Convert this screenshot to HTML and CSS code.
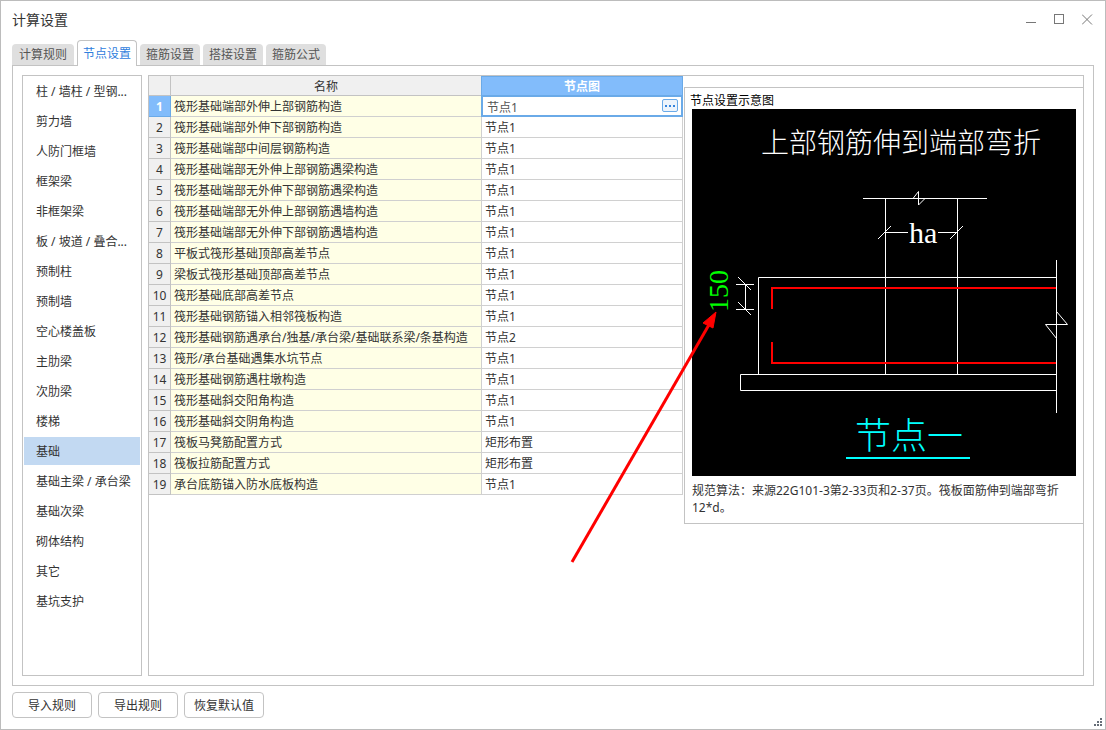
FILE: index.html
```html
<!DOCTYPE html>
<html lang="zh-CN">
<head>
<meta charset="utf-8">
<title>计算设置</title>
<link rel="stylesheet" href="styles.css">
</head>
<body>
<div class="window">
  <header class="titlebar">
    <h1 class="title">计算设置</h1>
    <div class="controls">
      <button type="button" class="control" aria-label="最小化"><svg width="12" height="12" viewBox="0 0 12 12"><path d="M0 8.5H10"/></svg></button>
      <button type="button" class="control" aria-label="最大化"><svg width="12" height="12" viewBox="0 0 12 12"><rect x="0.5" y="0.5" width="9" height="9"/></svg></button>
      <button type="button" class="control" aria-label="关闭"><svg width="12" height="12" viewBox="0 0 12 12"><path d="M0 0.5L10 10.5M10 0.5L0 10.5"/></svg></button>
    </div>
  </header>

  <div class="tabs" role="tablist">
    <button type="button" class="tab tab-first" role="tab">计算规则</button>
    <button type="button" class="tab active" role="tab" aria-selected="true">节点设置</button>
    <button type="button" class="tab" role="tab">箍筋设置</button>
    <button type="button" class="tab" role="tab">搭接设置</button>
    <button type="button" class="tab" role="tab">箍筋公式</button>
  </div>

  <main class="panel">
    <nav class="categories">
      <button type="button" class="category">柱 / 墙柱 / 型钢...</button>
      <button type="button" class="category">剪力墙</button>
      <button type="button" class="category">人防门框墙</button>
      <button type="button" class="category">框架梁</button>
      <button type="button" class="category">非框架梁</button>
      <button type="button" class="category">板 / 坡道 / 叠合...</button>
      <button type="button" class="category">预制柱</button>
      <button type="button" class="category">预制墙</button>
      <button type="button" class="category">空心楼盖板</button>
      <button type="button" class="category">主肋梁</button>
      <button type="button" class="category">次肋梁</button>
      <button type="button" class="category">楼梯</button>
      <button type="button" class="category selected">基础</button>
      <button type="button" class="category">基础主梁 / 承台梁</button>
      <button type="button" class="category">基础次梁</button>
      <button type="button" class="category">砌体结构</button>
      <button type="button" class="category">其它</button>
      <button type="button" class="category">基坑支护</button>
    </nav>

    <section class="content">
      <table class="grid">
        <colgroup><col class="col-no"><col class="col-name"><col class="col-node"></colgroup>
        <thead><tr><th></th><th>名称</th><th class="current">节点图</th></tr></thead>
        <tbody>
          <tr class="editing"><th class="current">1</th><td>筏形基础端部外伸上部钢筋构造</td><td><div class="editor"><input class="editor-input" type="text" value="节点1" aria-label="节点图"><button type="button" class="more" aria-label="选择节点图"><svg width="10" height="2" viewBox="0 0 10 2"><path d="M0 0h2v2h-2zM4 0h2v2h-2zM8 0h2v2h-2z"/></svg></button></div></td></tr>
          <tr><th>2</th><td>筏形基础端部外伸下部钢筋构造</td><td>节点1</td></tr>
          <tr><th>3</th><td>筏形基础端部中间层钢筋构造</td><td>节点1</td></tr>
          <tr><th>4</th><td>筏形基础端部无外伸上部钢筋遇梁构造</td><td>节点1</td></tr>
          <tr><th>5</th><td>筏形基础端部无外伸下部钢筋遇梁构造</td><td>节点1</td></tr>
          <tr><th>6</th><td>筏形基础端部无外伸上部钢筋遇墙构造</td><td>节点1</td></tr>
          <tr><th>7</th><td>筏形基础端部无外伸下部钢筋遇墙构造</td><td>节点1</td></tr>
          <tr><th>8</th><td>平板式筏形基础顶部高差节点</td><td>节点1</td></tr>
          <tr><th>9</th><td>梁板式筏形基础顶部高差节点</td><td>节点1</td></tr>
          <tr><th>10</th><td>筏形基础底部高差节点</td><td>节点1</td></tr>
          <tr><th>11</th><td>筏形基础钢筋锚入相邻筏板构造</td><td>节点1</td></tr>
          <tr><th>12</th><td>筏形基础钢筋遇承台/独基/承台梁/基础联系梁/条基构造</td><td>节点2</td></tr>
          <tr><th>13</th><td>筏形/承台基础遇集水坑节点</td><td>节点1</td></tr>
          <tr><th>14</th><td>筏形基础钢筋遇柱墩构造</td><td>节点1</td></tr>
          <tr><th>15</th><td>筏形基础斜交阳角构造</td><td>节点1</td></tr>
          <tr><th>16</th><td>筏形基础斜交阴角构造</td><td>节点1</td></tr>
          <tr><th>17</th><td>筏板马凳筋配置方式</td><td>矩形布置</td></tr>
          <tr><th>18</th><td>筏板拉筋配置方式</td><td>矩形布置</td></tr>
          <tr><th>19</th><td>承台底筋锚入防水底板构造</td><td>节点1</td></tr>
        </tbody>
      </table>

      <aside class="preview">
        <h2 class="preview-title">节点设置示意图</h2>
        <svg class="drawing" viewBox="0 0 384 367" role="img" aria-label="节点一">
          <rect width="384" height="367" fill="#000"/>
          <text x="69" y="44" class="cad-text cad-heading">上部钢筋伸到端部弯折</text>
          <g class="line">
            <path d="M171 89.5H295M193.5 89.5V265M265.5 89.5V265"/>
            <path d="M221 89.5L226.5 82.5V96L233 89.5"/>
            <path d="M193 123.5H216M246 123.5H265M186 130L199 117M258 130L271 117"/>
            <path d="M364 168.5H66.5V265.5M364 265.5H48.5V281.5H364M364.5 151V304"/>
            <path d="M364.5 202.5L375.5 215.5H353.5L364.5 229.5"/>
            <path d="M44 175.5H62M44 200.5H62M53.5 176V200M46 168L59 181M46 193L59 206"/>
          </g>
          <path d="M364 179H80V200M80 233V254H364" fill="none" stroke="#f00" stroke-width="2"/>
          <text x="217" y="134" class="cad-text cad-ha">ha</text>
          <text transform="translate(36 203) rotate(-90)" class="cad-text cad-dim">150</text>
          <text x="163" y="340" class="cad-text cad-name">节点一</text>
          <path d="M154 349H278" stroke="#0ff" stroke-width="2"/>
          <g class="pointer"><path d="M-120 453L18 214" stroke="#f00" stroke-width="3"/><path d="M24 203L21 219L11 214Z" fill="#f00" stroke="#f00"/></g>
        </svg>
        <p class="note">规范算法：来源22G101-3第2-33页和2-37页。筏板面筋伸到端部弯折12*d。</p>
      </aside>
    </section>
  </main>

  <footer class="actions">
    <button type="button" class="action">导入规则</button>
    <button type="button" class="action">导出规则</button>
    <button type="button" class="action">恢复默认值</button>
    <svg class="grip" width="8" height="8" viewBox="0 0 8 8" aria-hidden="true"><path d="M6 0h2v2h-2zM3 3h2v2h-2zM6 3h2v2h-2zM0 6h2v2h-2zM3 6h2v2h-2zM6 6h2v2h-2z"/></svg>
  </footer>
</div>
</body>
</html>
```

FILE: styles.css
```css
* {
  box-sizing: border-box;
}

body {
  margin: 0;
  background: #fff;
  color: #333;
  font: 12px/16px "Noto Sans", "Noto Sans CJK SC", sans-serif;
}

button,
input {
  margin: 0;
  padding: 0;
  border: 0;
  background: none;
  color: inherit;
  font: inherit;
}

.window {
  position: relative;
  display: flex;
  flex-direction: column;
  min-height: 100vh;
  padding: 0 11px 11px;
  border: 1px solid #bcbcbc;
}

.titlebar {
  display: flex;
  align-items: center;
  justify-content: space-between;
  height: 39px;
  padding-bottom: 2px;
}

.title {
  margin: 0;
  font-size: 14px;
  font-weight: 400;
  line-height: 20px;
}

.controls {
  display: flex;
  gap: 16px;
}

.control {
  width: 12px;
  height: 12px;
}

.control svg {
  display: block;
  fill: none;
  stroke: #777;
}

.tabs {
  display: flex;
  align-items: flex-end;
  gap: 3px;
  height: 25px;
}

.tab {
  width: 60px;
  height: 21px;
  border-radius: 4px 4px 0 0;
  background: #dfdfdf;
  color: #555;
}

.tab-first {
  width: 62px;
}

.tab.active {
  position: relative;
  height: 26px;
  margin-bottom: -1px;
  border: 1px solid #c3c3c3;
  border-bottom: 0;
  background: #fff;
  color: #2f80dd;
}

.panel {
  display: flex;
  flex: 1;
  gap: 6px;
  padding: 9px;
  border: 1px solid #c3c3c3;
}

.categories {
  display: flex;
  flex: none;
  flex-direction: column;
  gap: 2px;
  width: 120px;
  padding: 1px;
  border: 1px solid #c3c3c3;
}

.category {
  height: 28px;
  padding: 2px 0 0 12px;
  text-align: left;
  white-space: nowrap;
}

.category.selected {
  background: #c2d9f2;
}

.content {
  display: flex;
  flex: 1;
  align-items: flex-start;
  gap: 1px;
  min-width: 0;
  border: 1px solid #c3c3c3;
}

.grid {
  flex: none;
  width: 534px;
  table-layout: fixed;
  border-collapse: separate;
  border-spacing: 0;
}

.col-no {
  width: 22px;
}

.col-name {
  width: 311px;
}

.col-node {
  width: 201px;
}

.grid th,
.grid td {
  height: 21px;
  padding: 2px 3px 0;
  border-right: 1px solid #d0d0d0;
  border-bottom: 1px solid #d0d0d0;
  text-align: left;
  white-space: nowrap;
}

.grid th {
  padding: 2px 0 0;
  border-color: #c3c3c3;
  background: #f0f0f0;
  font-weight: 400;
  text-align: center;
}

.grid thead th {
  height: 20px;
}

.grid td:nth-child(2) {
  background: #ffffe6;
}

.grid th.current {
  border-color: #6aaae8;
  background: #82bcfb;
  color: #fff;
  font-weight: 700;
}

.grid thead th.current {
  box-shadow: -1px 0 #6aaae8, inset 0 1px #6aaae8;
}

.grid .editing td:last-child {
  padding: 0;
  border-color: #6aaae8;
  box-shadow: -1px 0 #6aaae8, inset 1px 1px #6aaae8, inset -1px -1px #6aaae8;
}

.editor {
  display: flex;
  align-items: center;
  height: 20px;
  padding: 0 4px 0 5px;
}

.editor-input {
  flex: 1;
  min-width: 0;
  height: 18px;
  padding-top: 2px;
  color: #555;
}

.more {
  display: flex;
  align-items: center;
  justify-content: center;
  width: 16px;
  height: 13px;
  margin-bottom: 1px;
  border: 1px solid #6aaae8;
  border-radius: 2px;
  background: #edf4fc;
}

.more svg {
  fill: #3684dc;
}

.preview {
  flex: 1;
  min-width: 0;
  margin-top: 11px;
  padding: 5px 7px 7px;
  border: solid #c3c3c3;
  border-width: 1px 0 1px 1px;
}

.preview-title {
  margin: 0 -2px;
  color: #000;
  font-size: 12px;
  font-weight: 400;
  line-height: 16px;
}

.drawing {
  position: relative;
  display: block;
  width: 100%;
  height: auto;
  overflow: visible;
}

.line {
  fill: none;
  stroke: #fff;
}

.cad-text {
  fill: #fff;
  font-family: "Liberation Serif", "Noto Sans CJK SC", serif;
  font-weight: 300;
}

.cad-heading {
  font-size: 28px;
}

.cad-ha {
  font-size: 30px;
}

.cad-dim {
  fill: #0f0;
  font-size: 28px;
}

.cad-name {
  fill: #0ff;
  font-size: 36px;
}

.note {
  margin: 6px 0 0;
  line-height: 17px;
}

.actions {
  display: flex;
  gap: 6px;
  margin-top: 6px;
}

.action {
  width: 80px;
  height: 26px;
  padding-top: 2px;
  border: 1px solid #c3c3c3;
  border-radius: 4px;
}

.grip {
  position: absolute;
  right: 3px;
  bottom: 3px;
  fill: #666e78;
}
```
